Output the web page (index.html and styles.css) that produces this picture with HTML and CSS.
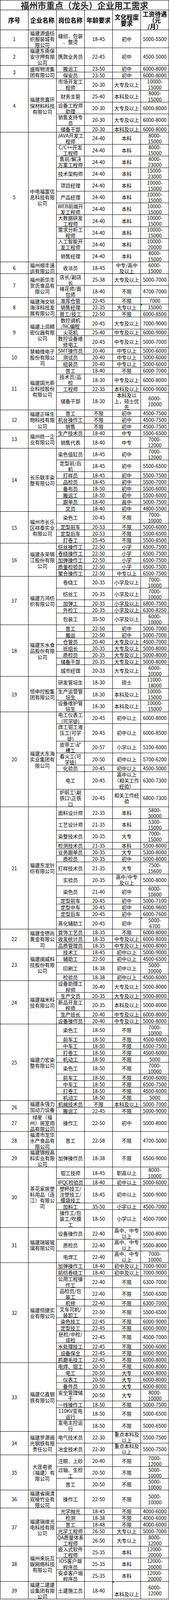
FILE: index.html
```html
<!DOCTYPE html>
<html lang="zh-CN">
<head>
<meta charset="utf-8">
<title>福州市重点（龙头）企业用工需求</title>
<link rel="stylesheet" href="styles.css">
</head>
<body>
<div class="sheet">
  <div class="title">福州市重点（龙头）企业用工需求</div>
  <div class="head">
    <div>序号</div><div>企业名称</div><div>岗位名称</div><div>年龄要求</div><div>文化程度<br>要求</div><div>工资待遇<br>（元<br>/月）</div>
  </div>

  <div class="co"><div class="num">1</div><div class="name">福建源盛纺<br>织服装城有<br>限公司</div><div class="jobs">
    <div class="job t"><div>缝纫、包装<br>、整烫</div><div>18-45</div><div>初中</div><div>5000-5500</div></div>
  </div></div>

  <div class="co"><div class="num">2</div><div class="name">福建东南保<br>安守押有限<br>公司</div><div class="jobs">
    <div class="job t"><div>携款业务员</div><div>22-45</div><div>初中</div><div>4500-5000</div></div>
  </div></div>

  <div class="co"><div class="num">3</div><div class="name">盛辉物流集<br>团有限公司</div><div class="jobs">
    <div class="job"><div>搬运工</div><div>23-50</div><div>初中</div><div>6000-8000</div></div>
    <div class="job"><div>保安员</div><div>23-50</div><div>初中</div><div>6000-8000</div></div>
  </div></div>

  <div class="co"><div class="num">4</div><div class="name">福建思嘉环<br>保材料科技<br>有限公司</div><div class="jobs">
    <div class="job d"><div>市场开发工<br>程师</div><div>20-30</div><div>大专及以上</div><div>10000-<br>15000</div></div>
    <div class="job d"><div>财务主管</div><div>25-40</div><div>本科及以上</div><div>8000-<br>15000</div></div>
    <div class="job d"><div>设备工程师<br>助理</div><div>20-30</div><div>大专及以上</div><div>6000-8000</div></div>
    <div class="job d"><div>销售支持专<br>员</div><div>20-30</div><div>大专及以上</div><div>6000-8000</div></div>
    <div class="job"><div>储备干部</div><div>20-30</div><div>本科及以上</div><div>6000-8000</div></div>
  </div></div>

  <div class="co"><div class="num">5</div><div class="name">中电福富信<br>息科技有限<br>公司</div><div class="jobs">
    <div class="job d"><div>JAVA开发工<br>程师</div><div>24-40</div><div>本科</div><div>8000-<br>15000</div></div>
    <div class="job d"><div>C/C++开发<br>工程师</div><div>24-40</div><div>本科</div><div>8000-<br>15000</div></div>
    <div class="job d"><div>售前/解决<br>方案工程师</div><div>24-40</div><div>本科</div><div>8000-<br>23000</div></div>
    <div class="job d"><div>技术架构师</div><div>24-40</div><div>本科</div><div>15000-<br>23000</div></div>
    <div class="job d"><div>项目经理</div><div>24-40</div><div>本科</div><div>10000-<br>15000</div></div>
    <div class="job d"><div>产品经理</div><div>24-40</div><div>本科</div><div>10000-<br>15000</div></div>
    <div class="job d"><div>WEB前端开<br>发工程师</div><div>24-40</div><div>本科</div><div>10000-<br>15000</div></div>
    <div class="job d"><div>大数据研发<br>工程师</div><div>24-40</div><div>本科</div><div>10000-<br>15000</div></div>
    <div class="job d"><div>需求分析工<br>程师</div><div>24-40</div><div>本科</div><div>10000-<br>15000</div></div>
    <div class="job d"><div>人工智能开<br>发工程师</div><div>24-40</div><div>本科</div><div>10000-<br>20000</div></div>
    <div class="job d"><div>销售经理</div><div>24-40</div><div>本科</div><div>8000-<br>15000</div></div>
  </div></div>

  <div class="co"><div class="num">6</div><div class="name">福州顺丰速<br>运有限公司</div><div class="jobs">
    <div class="job d"><div>收派员</div><div>18-45</div><div>中专/高中<br>及以上</div><div>6000-<br>15000</div></div>
  </div></div>

  <div class="co"><div class="num">7</div><div class="name">福州新华丰<br>贺氏食品有<br>限公司</div><div class="jobs">
    <div class="job d"><div>店长/副店<br>长</div><div>25-38</div><div>大专及以上</div><div>5000-7000</div></div>
    <div class="job d"><div>裱花师/面<br>包师</div><div>18-40</div><div>不限</div><div>4700-7000</div></div>
  </div></div>

  <div class="co"><div class="num">8</div><div class="name">福建海文铭<br>海洋科技发<br>展有限公司</div><div class="jobs">
    <div class="job"><div>准库仓管</div><div>22-45</div><div>不限</div><div>7000</div></div>
    <div class="job"><div>销售经理</div><div>22-35</div><div>大专以上</div><div class="mk">15000</div></div>
    <div class="job"><div>普工/技工</div><div>22-50</div><div>不限</div><div>6000-8500</div></div>
  </div></div>

  <div class="co"><div class="num">9</div><div class="name">福建上润精<br>密仪器有限<br>公司</div><div class="jobs">
    <div class="job d"><div>数控调机<br>/NC编程</div><div>20-45</div><div>大专及以上</div><div>7000-9000</div></div>
    <div class="job"><div>火花机</div><div>25-40</div><div>中专及以上</div><div>6000-9000</div></div>
    <div class="job d"><div>数控设备维<br>修电工</div><div>20-45</div><div>中专及以上</div><div>5000-7000</div></div>
  </div></div>

  <div class="co"><div class="num">10</div><div class="name">慧翰微电子<br>股份有限公<br>司</div><div class="jobs">
    <div class="job"><div>SMT操作员</div><div>20-40</div><div>中专以上</div><div>5000-6000</div></div>
    <div class="job"><div>测试员</div><div>20-40</div><div>中专以上</div><div>5000-6000</div></div>
    <div class="job"><div>组装员</div><div>20-40</div><div>中专以上</div><div>5000-6000</div></div>
  </div></div>

  <div class="co"><div class="num">11</div><div class="name">福建国光新<br>业科技股份<br>有限公司</div><div class="jobs">
    <div class="job"><div>普工</div><div>18-40</div><div>不限</div><div>6000-7000</div></div>
    <div class="job d"><div>技术员/品<br>检</div><div>18-30</div><div>中专及以上</div><div>6000-8000</div></div>
    <div class="job"><div>工程师</div><div>22-35</div><div>本科及以上</div><div>6000-9000</div></div>
    <div class="job t"><div>储备干部</div><div>18-30</div><div>本科及以<br>上，硕士优<br>先</div><div>6000-<br>10000</div></div>
  </div></div>

  <div class="co"><div class="num">12</div><div class="name">福建正味生<br>物科技有限<br>公司</div><div class="jobs">
    <div class="job"><div>普工</div><div>不限</div><div>初中</div><div>4500-7500</div></div>
    <div class="job"><div>机台操作工</div><div>不限</div><div>初中</div><div>4500-7500</div></div>
    <div class="job"><div>销售</div><div>不限</div><div>初中</div><div>4500-7500</div></div>
  </div></div>

  <div class="co"><div class="num">13</div><div class="name">福州统一企<br>业有限公司</div><div class="jobs">
    <div class="job"><div>生产技术员</div><div>18-40</div><div>中专</div><div>5500-6500</div></div>
    <div class="job d"><div>销售代表</div><div>18-40</div><div>中专</div><div>7000-<br>12000</div></div>
  </div></div>

  <div class="co"><div class="num">14</div><div class="name">长乐联丰染<br>整有限公司</div><div class="jobs">
    <div class="job d"><div>染色值缸员</div><div>18-45</div><div>初中</div><div>7000-<br>12000</div></div>
    <div class="job d"><div>定型前/后<br>机</div><div>18-45</div><div>初中</div><div>5500-6500</div></div>
    <div class="job"><div>打样员</div><div>18-45</div><div>初中</div><div>5500-7500</div></div>
    <div class="job"><div>品检员</div><div>18-45</div><div>初中</div><div>5500-7000</div></div>
    <div class="job"><div>备布员</div><div>18-50</div><div>初中</div><div>5500-6000</div></div>
    <div class="job"><div>搬运工</div><div>18-50</div><div>初中</div><div>5500-6000</div></div>
    <div class="job"><div>跟单员</div><div>18-40</div><div>高中</div><div>5000-7500</div></div>
    <div class="job"><div>文员</div><div>18-40</div><div>初中</div><div>4800-5500</div></div>
  </div></div>

  <div class="co"><div class="num">15</div><div class="name">福州市长乐<br>区祥泰实业<br>有限公司</div><div class="jobs">
    <div class="job d"><div>染色工</div><div>20-45</div><div>不限</div><div>7000-<br>10000</div></div>
    <div class="job"><div>定型前车</div><div>20-53</div><div>不限</div><div>5000-6000</div></div>
    <div class="job"><div>定型后车</div><div>20-53</div><div>不限</div><div>5500-6500</div></div>
    <div class="job"><div>打卷工</div><div>25-45</div><div>不限</div><div>5500-8500</div></div>
  </div></div>

  <div class="co"><div class="num">16</div><div class="name">福建永荣锦<br>江股份有限<br>公司</div><div class="jobs">
    <div class="job"><div>纺丝操作工</div><div>22-50</div><div>小学</div><div>6500-7500</div></div>
    <div class="job"><div>卷绕操作工</div><div>22-50</div><div>小学</div><div>6500-7500</div></div>
    <div class="job"><div>加弹操作工</div><div>22-50</div><div>小学</div><div>6500-7500</div></div>
    <div class="job"><div>质量检验员</div><div>22-50</div><div>小学</div><div>6500-7500</div></div>
    <div class="job"><div>聚合操作工</div><div>22-50</div><div>中专以上</div><div>6500-7500</div></div>
  </div></div>

  <div class="co"><div class="num">17</div><div class="name">福建万鸿纺<br>织有限公司</div><div class="jobs">
    <div class="job d"><div>卷绕工</div><div>20-35</div><div>小学及以上</div><div>7000-<br>10000</div></div>
    <div class="job d"><div>纺丝工</div><div>20-35</div><div>小学及以上</div><div>7000-<br>10000</div></div>
    <div class="job"><div>加弹工</div><div>20-35</div><div>小学及以上</div><div>6800-7500</div></div>
    <div class="job"><div>外检工</div><div>20-35</div><div>小学及以上</div><div>6300-8250</div></div>
    <div class="job d"><div>包装工</div><div>35-50</div><div>小学及以上</div><div>6000-<br>10000</div></div>
  </div></div>

  <div class="co"><div class="num">18</div><div class="name">福建东水食<br>品股份有限<br>公司</div><div class="jobs">
    <div class="job"><div>普工</div><div>22-50</div><div>初中</div><div>5000-7000</div></div>
    <div class="job"><div>搬运</div><div>22-50</div><div>初中</div><div>5000-7000</div></div>
    <div class="job"><div>仓管员</div><div>20-40</div><div>大专及以上</div><div>4500-7000</div></div>
    <div class="job"><div>班组长</div><div>20-35</div><div>大专及以上</div><div>5000-8000</div></div>
    <div class="job"><div>质检员</div><div>20-35</div><div>大专及以上</div><div>5000-8000</div></div>
    <div class="job"><div>储备干部</div><div>20-35</div><div>大专及以上</div><div>5000-8000</div></div>
    <div class="job d"><div>城市经理</div><div>20-33</div><div>大专及以上</div><div>6000-<br>10000</div></div>
  </div></div>

  <div class="co"><div class="num">19</div><div class="name">恒申控股集<br>团有限公司</div><div class="jobs">
    <div class="job d"><div>研发管培生</div><div>18-30</div><div>硕士</div><div>11000-<br>18000</div></div>
    <div class="job d"><div>生产运营管<br>培生</div><div>18-30</div><div>本科及以上</div><div>10000-<br>15000</div></div>
    <div class="job d"><div>设备维护管<br>培生</div><div>18-30</div><div>本科及以上</div><div>10000-<br>15000</div></div>
  </div></div>

  <div class="co"><div class="num">20</div><div class="name">福建大东海<br>实业集团有<br>限公司</div><div class="jobs">
    <div class="job d"><div>电工仪表工<br>(可学徒)</div><div>20-45</div><div>初中以上</div><div>6000-8000</div></div>
    <div class="job t"><div>焊工钳工液<br>压工(可学<br>徒)</div><div>20-45</div><div>初中以上</div><div>6000-8500</div></div>
    <div class="job d"><div>皮带工\矿<br>槽工</div><div>20-57</div><div>小学以上</div><div>5100-6000</div></div>
    <div class="job d"><div>看火工(可<br>学徒)</div><div>20-50</div><div>初中以上</div><div>5700-6200</div></div>
    <div class="job"><div>化验员</div><div>20-45</div><div>初中以上</div><div>4500-5000</div></div>
    <div class="job t"><div>电工</div><div>20-45</div><div>高中以上<br>（相关工作<br>经验）</div><div>6300-7300</div></div>
    <div class="job t"><div>炉前工\副<br>铁口\正铁<br>口</div><div>20-45</div><div>相关工作经<br>验</div><div>6800-7300</div></div>
  </div></div>

  <div class="co"><div class="num">21</div><div class="name">福建东龙针<br>纺有限公司</div><div class="jobs">
    <div class="job d"><div>面料设计师</div><div>22-35</div><div>本科</div><div>5800-<br>30000</div></div>
    <div class="job d"><div>工艺设计师</div><div>21-35</div><div>本科</div><div>5300-<br>15000</div></div>
    <div class="job d"><div>染整技术员</div><div>20-35</div><div>大专</div><div>7000-<br>15000</div></div>
    <div class="job"><div>检测技术员</div><div>21-35</div><div>本科</div><div>5500-8000</div></div>
    <div class="job"><div>业务跟单员</div><div>20-35</div><div>大专</div><div>5300-8000</div></div>
    <div class="job"><div>质检员</div><div>20-35</div><div>初中</div><div>5000-8000</div></div>
    <div class="job d"><div>打样技术员</div><div>21-35</div><div>大专</div><div>7500-<br>15600</div></div>
    <div class="job d"><div>实验员</div><div>20-35</div><div>高中/中专<br>及以上</div><div>5000-8000</div></div>
    <div class="job d"><div>染色员</div><div>21-40</div><div>初中</div><div>6000-<br>10600</div></div>
    <div class="job"><div>定型前车</div><div>20-45</div><div>初中</div><div>5000-7100</div></div>
    <div class="job"><div>定型中车</div><div>20-45</div><div>初中</div><div>6000-9600</div></div>
    <div class="job"><div>定型后车</div><div>20-45</div><div>初中</div><div>6000-7600</div></div>
    <div class="job d"><div>蒸化辅助工</div><div>20-45</div><div>初中</div><div class="mk">5000-<br>6700</div></div>
  </div></div>

  <div class="co"><div class="num">22</div><div class="name">福建金德尚<br>黄金有限公<br>司</div><div class="jobs">
    <div class="job"><div>首饰工艺员</div><div>18-35</div><div>不限</div><div>6000-8000</div></div>
    <div class="job"><div>收发统计员</div><div>18-35</div><div>中专及以上</div><div>6000-8000</div></div>
    <div class="job"><div>品质管理员</div><div>18-35</div><div>中专及以上</div><div>6000-8000</div></div>
  </div></div>

  <div class="co"><div class="num">23</div><div class="name">福建闽威科<br>技股份有限<br>公司</div><div class="jobs">
    <div class="job"><div>技术工</div><div>18-45</div><div>初中以上</div><div>5000-9000</div></div>
    <div class="job"><div>辅助工</div><div>22-50</div><div>初中以上</div><div>4500-6500</div></div>
    <div class="job d"><div>印刷工</div><div>18-38</div><div>初中以上</div><div>5000-<br>10000</div></div>
    <div class="job"><div>检验员</div><div>18-38</div><div>初中以上</div><div>4500-6000</div></div>
  </div></div>

  <div class="co"><div class="num">24</div><div class="name">福建福米科<br>技有限公司</div><div class="jobs">
    <div class="job d"><div>设备助理工<br>程师</div><div>20-40</div><div>大专及以上</div><div>5000-8000</div></div>
    <div class="job"><div>生产文员</div><div>20-35</div><div>大专及以上</div><div>5000-8000</div></div>
    <div class="job d"><div>新品开发工<br>程师</div><div>20-35</div><div>本科及以上</div><div>5000-8000</div></div>
    <div class="job"><div>生产班长</div><div>20-40</div><div>中专及以上</div><div>6000-8000</div></div>
    <div class="job"><div>设备操作员</div><div>20-40</div><div>中专及以上</div><div>5000-8000</div></div>
  </div></div>

  <div class="co"><div class="num">25</div><div class="name">福建力宏染<br>整有限公司</div><div class="jobs">
    <div class="job d"><div>染色工</div><div>18-50</div><div>不限</div><div>7000-<br>10000</div></div>
    <div class="job"><div>前车工</div><div>18-50</div><div>不限</div><div>4500-6000</div></div>
    <div class="job"><div>中车工</div><div>18-50</div><div>不限</div><div>6500-7500</div></div>
    <div class="job"><div>打卷工</div><div>18-50</div><div>不限</div><div>4500-6000</div></div>
    <div class="job"><div>机动工</div><div>18-50</div><div>不限</div><div>5000</div></div>
    <div class="job d"><div>染色工</div><div>18-50</div><div>不限</div><div>7000-<br>10000</div></div>
    <div class="job"><div>前车工</div><div>18-50</div><div>不限</div><div>4500-6000</div></div>
    <div class="job"><div>中车工</div><div>18-50</div><div>不限</div><div>6500-7500</div></div>
    <div class="job"><div>打卷工</div><div>18-50</div><div>不限</div><div>4500-6000</div></div>
    <div class="job"><div>机动工</div><div>18-50</div><div>不限</div><div>5000</div></div>
  </div></div>

  <div class="co"><div class="num">26</div><div class="name clip">福建永强力<br>加动力设备<br>有限公司</div><div class="jobs">
    <div class="job"><div>机械技术员</div><div>不限</div><div>本科及以上</div><div>5000-7000</div></div>
    <div class="job"><div>搬运工</div><div>22-45</div><div>不限</div><div>5000-9000</div></div>
  </div></div>

  <div class="co"><div class="num">27</div><div class="name">绿星（福<br>州）居室用<br>品有限公司</div><div class="jobs">
    <div class="job t"><div>操作工</div><div>22-50</div><div>初中</div><div>5000-8000</div></div>
  </div></div>

  <div class="co"><div class="num">28</div><div class="name">福清市龙华<br>水产食品有<br>限公司</div><div class="jobs">
    <div class="job t"><div>普工</div><div>22-58</div><div>不限</div><div>4700-5000</div></div>
  </div></div>

  <div class="co"><div class="num">29</div><div class="name">福建锦程高<br>科实业有限<br>公司</div><div class="jobs">
    <div class="job t"><div>加弹操作员</div><div>18-38</div><div>不限</div><div>6500-9000</div></div>
  </div></div>

  <div class="co"><div class="num">30</div><div class="name">茶花家居塑<br>料用品（连<br>江）有限公<br>司</div><div class="jobs">
    <div class="job d"><div>钳工技师</div><div>18-45</div><div>职高以上</div><div>8000-<br>10000</div></div>
    <div class="job"><div class="tight">IPQC检验员</div><div>18-40</div><div>初中以上</div><div>5000-6000</div></div>
    <div class="job t"><div>塑杯技工/<br>注塑技工/<br>膜袋技工</div><div>18-45</div><div>初中以上</div><div>5000-9000</div></div>
    <div class="job"><div>加料工</div><div>35-50</div><div>小学以上</div><div>4500-7000</div></div>
    <div class="job t"><div>操作工/包<br>装工/吹膜<br>工</div><div>18-50</div><div>小学以上</div><div>4500-7000</div></div>
  </div></div>

  <div class="co"><div class="num">31</div><div class="name">福建瑞玻玻<br>璃有限公司</div><div class="jobs">
    <div class="job d"><div>设备操作员</div><div>22-40</div><div>高中、中专<br>以上</div><div>5500-8000</div></div>
    <div class="job d"><div>质检员</div><div>22-40</div><div>高中、中专<br>以上</div><div>5500-8000</div></div>
    <div class="job d"><div>电焊工</div><div>22-40</div><div>高中、中专<br>以上</div><div>7000-<br>10000</div></div>
  </div></div>

  <div class="co"><div class="num">32</div><div class="name">福建恒捷实<br>业有限公司</div><div class="jobs">
    <div class="job"><div>加弹操作工</div><div>18-40</div><div>初中及以上</div><div>7000-9000</div></div>
    <div class="job"><div>前纺卷绕工</div><div>18-40</div><div>初中及以上</div><div>7000-9000</div></div>
    <div class="job d"><div>公用工程操<br>作工</div><div>22-40</div><div>不限</div><div>6300-7000</div></div>
    <div class="job d"><div>品检员/包<br>装工</div><div>22-40</div><div>不限</div><div>5500-6500</div></div>
    <div class="job"><div>机修</div><div>22-40</div><div>不限</div><div>6300-7000</div></div>
    <div class="job d"><div>叉车司机/<br>装卸工</div><div>22-50</div><div>不限</div><div>5500-6500</div></div>
    <div class="job"><div>染色技工</div><div>22-45</div><div>不限</div><div>6000-9000</div></div>
    <div class="job"><div>定型技工</div><div>22-45</div><div>不限</div><div>6000-9000</div></div>
    <div class="job d"><div>胚检/中检/<br>成检</div><div>22-45</div><div>不限</div><div>4500-7000</div></div>
    <div class="job"><div>水处理技工</div><div>22-45</div><div>不限</div><div>5000-6000</div></div>
    <div class="job"><div>设备保全</div><div>22-45</div><div>不限</div><div>6000-9000</div></div>
    <div class="job"><div>抓磨毛技工</div><div>22-45</div><div>不限</div><div>6000-8000</div></div>
  </div></div>

  <div class="co"><div class="num">33</div><div class="name">福建亿鑫钢<br>铁有限公司</div><div class="jobs">
    <div class="job"><div>电焊、钳工</div><div>20-50</div><div>不限</div><div>6000-8000</div></div>
    <div class="job"><div>电工</div><div>20-50</div><div>大专</div><div>6000-8000</div></div>
    <div class="job"><div>仪表工</div><div>20-50</div><div>大专</div><div>6000-8000</div></div>
    <div class="job"><div>备件员</div><div>20-50</div><div>大专</div><div>6000-8000</div></div>
    <div class="job d"><div>安全管理储<br>干</div><div>20-50</div><div>大专</div><div>8000-<br>10000</div></div>
    <div class="job"><div>一线操作工</div><div>18-50</div><div>不限</div><div>5000-7500</div></div>
    <div class="job d"><div>110KV变电<br>运行</div><div>18-50</div><div>不限</div><div>5000-6500</div></div>
    <div class="job d"><div>发电主控运<br>行</div><div>18-50</div><div>不限</div><div>5000-6500</div></div>
  </div></div>

  <div class="co"><div class="num">34</div><div class="name">福建罗源闽<br>光钢铁有限<br>责任公司</div><div class="jobs">
    <div class="job d"><div>电气技术员</div><div>22-30</div><div>重点本科及<br>以上</div><div>5500-7500</div></div>
    <div class="job d"><div>冶金技术员</div><div>22-30</div><div>重点本科及<br>以上</div><div>5500-7500</div></div>
  </div></div>

  <div class="co"><div class="num">35</div><div class="name">大莲电瓷<br>（福建）有<br>限公司</div><div class="jobs">
    <div class="job d"><div>注眼、上砂</div><div>20-40</div><div>不限</div><div>7000-<br>12000</div></div>
    <div class="job d"><div>过轴、生检<br>工</div><div>20-50</div><div>不限</div><div>5000-<br>10000</div></div>
    <div class="job d"><div>普工</div><div>20-50</div><div>不限</div><div>5000-<br>10000</div></div>
  </div></div>

  <div class="co"><div class="num">36</div><div class="name">福建省闽清<br>双棱竹业有<br>限公司</div><div class="jobs">
    <div class="job t"><div>操作工</div><div>22-50</div><div>不限</div><div>5000-<br>10000</div></div>
  </div></div>

  <div class="co"><div class="num">37</div><div class="name">福建瑞维光<br>电科技有限<br>公司</div><div class="jobs">
    <div class="job"><div>光学抛光</div><div>18-45</div><div>不限</div><div>4000-6000</div></div>
    <div class="job"><div>检测</div><div>18-38</div><div>不限</div><div>4000-6000</div></div>
    <div class="job"><div>普工</div><div>18-48</div><div>不限</div><div>4000-6000</div></div>
    <div class="job"><div>光学工程师</div><div>26-50</div><div>大专以上</div><div>5000-7000</div></div>
    <div class="job d"><div>QA质量体系<br>工程师</div><div>26-50</div><div>大专以上</div><div>8000-<br>12000</div></div>
  </div></div>

  <div class="co"><div class="num">38</div><div class="name">福州来玩互<br>娱网络科技<br>有限公司</div><div class="jobs">
    <div class="job d"><div>嵌入式软件<br>工程师</div><div>25-35</div><div>本科</div><div>12000-<br>20000</div></div>
    <div class="job d"><div>IOS客户端<br>程序员</div><div>25-35</div><div>本科</div><div>12000-<br>20000</div></div>
    <div class="job d"><div>安卓客户端<br>程序员</div><div>25-35</div><div>本科</div><div>12000-<br>20000</div></div>
  </div></div>

  <div class="co"><div class="num">39</div><div class="name">福建二建建<br>设集团有限<br>公司</div><div class="jobs">
    <div class="job t"><div>土建施工员</div><div>18-40</div><div class="mk bot">本科及以上</div><div>6000-<br>12000</div></div>
  </div></div>
</div>
</body>
</html>
```

FILE: styles.css
```css
/* The browser window opens at 4096px tall, so every vertical size is the
   reference's size times --k (4096 / 4344) so the whole sheet stays visible. */
:root {
  --k: 0.9428;
}

* {
  box-sizing: border-box;
  margin: 0;
  padding: 0;
}

html,
body {
  margin: 0;
  background: #fff;
  color: #000;
  font-family: "Noto Sans CJK SC", sans-serif;
}

.sheet {
  width: 433px;
  background: #000;
  padding: 1px;
  display: flex;
  flex-direction: column;
  gap: 1px;
}

.title {
  height: calc(27px * var(--k) - 1px);
  flex: none;
  background: #fff;
  display: flex;
  align-items: center;
  justify-content: center;
  font-size: 21.8px;
  line-height: 24px;
  font-weight: 700;
  color: #2b2b2b;
  white-space: nowrap;
  contain: size;
}

.head {
  display: grid;
  grid-template-columns: repeat(6, 71px);
  grid-template-rows: 100%;
  gap: 1px;
  height: calc(54px * var(--k) - 1px);
  flex: none;
}

.head > div {
  background: #fff;
  display: flex;
  align-items: center;
  justify-content: center;
  text-align: center;
  font-size: 15.5px;
  line-height: calc(17px * var(--k));
  font-weight: 700;
  white-space: nowrap;
  contain: size;
}

.co {
  display: flex;
  gap: 1px;
  flex: none;
  font-size: 12.7px;
  line-height: calc(16px * var(--k));
}

.num,
.name {
  width: 71px;
  flex: none;
  background: #fff;
  display: flex;
  align-items: center;
  justify-content: center;
  text-align: center;
  white-space: nowrap;
  contain: size;
}

.name.clip {
  align-items: flex-start;
  overflow: hidden;
}

.jobs {
  width: 287px;
  flex: none;
  display: flex;
  flex-direction: column;
  gap: 1px;
}

.job {
  display: grid;
  grid-template-columns: repeat(4, 71px);
  grid-template-rows: 100%;
  gap: 1px;
  height: calc(18px * var(--k) - 1px);
  flex: none;
}

.job.d {
  height: calc(32px * var(--k) - 1px);
}

.job.t {
  height: calc(48px * var(--k) - 1px);
}

.job > div {
  background: #fff;
  display: flex;
  align-items: center;
  justify-content: center;
  text-align: center;
  white-space: nowrap;
  contain: size;
}

.job > .mk {
  background: linear-gradient(135deg, #2f8f2f 3.5px, #fff 3.5px);
}

.job > .bot {
  align-items: flex-end;
  padding-bottom: calc(6px * var(--k));
}

.tight {
  letter-spacing: -0.4px;
}
```
